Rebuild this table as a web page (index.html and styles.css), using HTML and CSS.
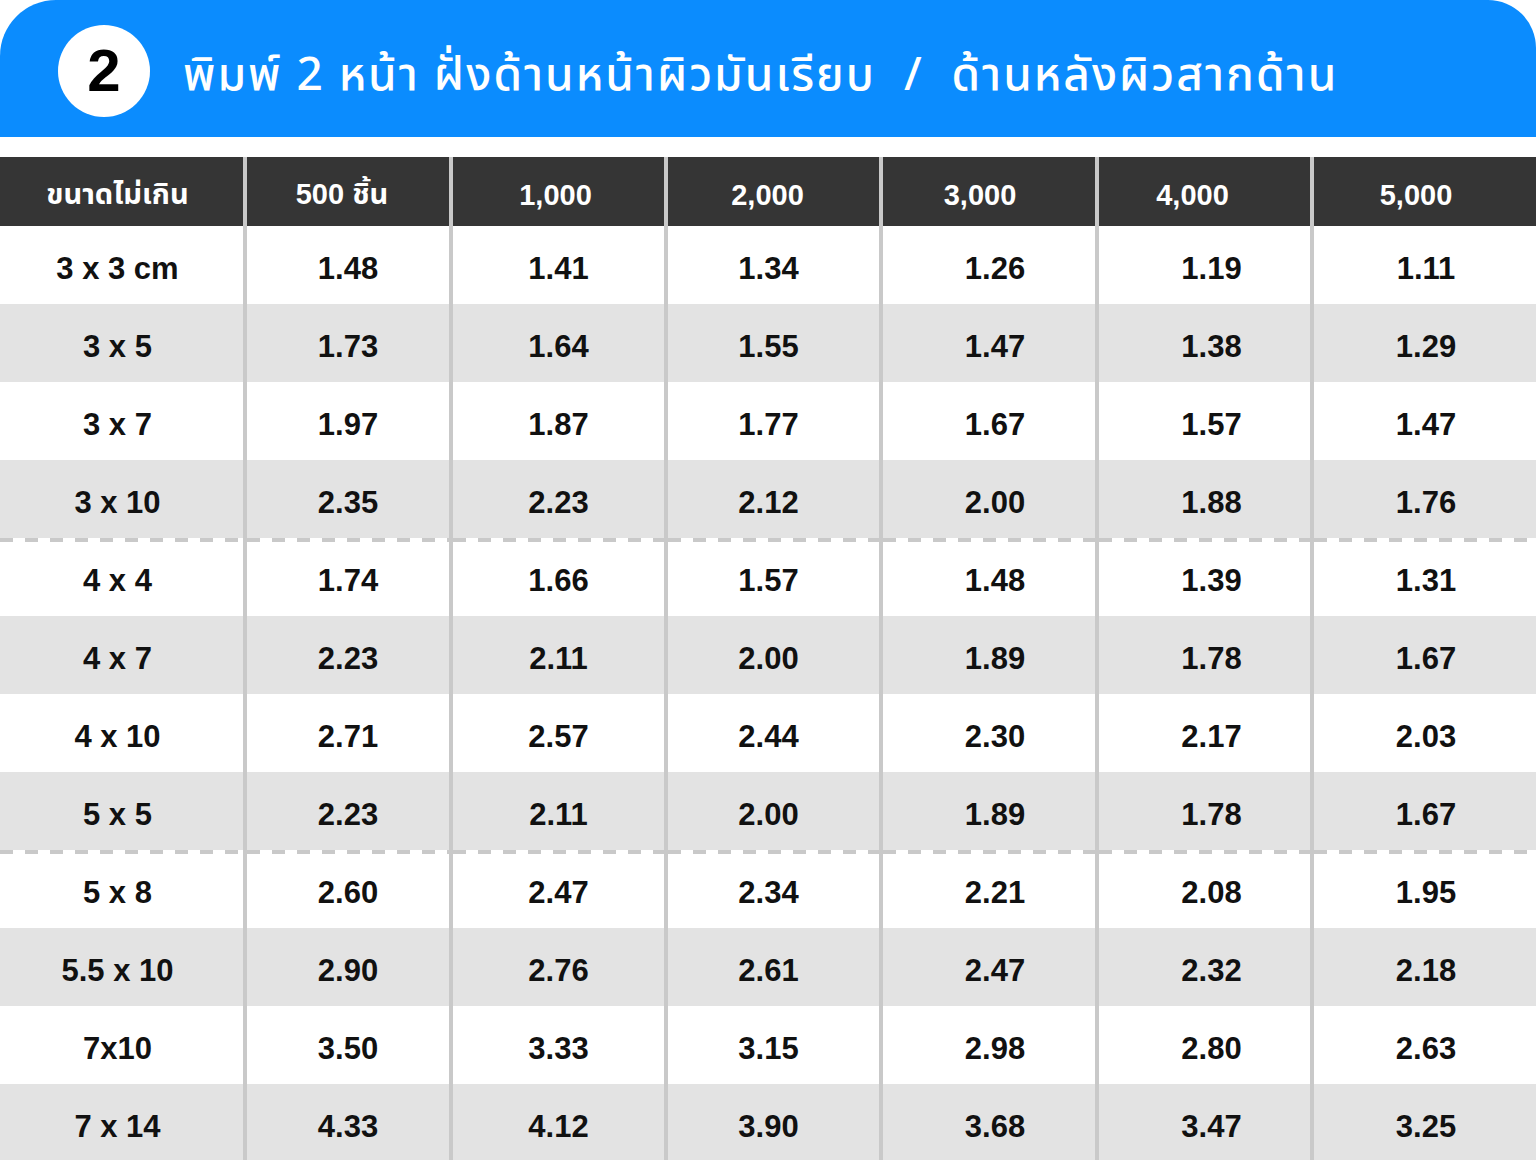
FILE: index.html
```html
<!DOCTYPE html>
<html lang="th">
<head>
<meta charset="utf-8">
<title>ราคา สติกเกอร์ พิมพ์ 2 หน้า</title>
<link rel="stylesheet" href="styles.css">
</head>
<body>
<div class="page">
  <header class="banner">
    <div class="badge">2</div>
    <h1 class="title">พิมพ์ 2 หน้า ฝั่งด้านหน้าผิวมันเรียบ &nbsp;/&nbsp; ด้านหลังผิวสากด้าน</h1>
  </header>

  <div class="table">
    <div class="cell head">ขนาดไม่เกิน</div>
    <div class="cell head">500 ชิ้น</div>
    <div class="cell head">1,000</div>
    <div class="cell head">2,000</div>
    <div class="cell head">3,000</div>
    <div class="cell head">4,000</div>
    <div class="cell head">5,000</div>

    <div class="cell">3 x 3 cm</div><div class="cell">1.48</div><div class="cell">1.41</div><div class="cell">1.34</div><div class="cell">1.26</div><div class="cell">1.19</div><div class="cell">1.11</div>

    <div class="cell alt">3 x 5</div><div class="cell alt">1.73</div><div class="cell alt">1.64</div><div class="cell alt">1.55</div><div class="cell alt">1.47</div><div class="cell alt">1.38</div><div class="cell alt">1.29</div>

    <div class="cell">3 x 7</div><div class="cell">1.97</div><div class="cell">1.87</div><div class="cell">1.77</div><div class="cell">1.67</div><div class="cell">1.57</div><div class="cell">1.47</div>

    <div class="cell alt">3 x 10</div><div class="cell alt">2.35</div><div class="cell alt">2.23</div><div class="cell alt">2.12</div><div class="cell alt">2.00</div><div class="cell alt">1.88</div><div class="cell alt">1.76</div>

    <div class="cell dash">4 x 4</div><div class="cell dash">1.74</div><div class="cell dash">1.66</div><div class="cell dash">1.57</div><div class="cell dash">1.48</div><div class="cell dash">1.39</div><div class="cell dash">1.31</div>

    <div class="cell alt">4 x 7</div><div class="cell alt">2.23</div><div class="cell alt">2.11</div><div class="cell alt">2.00</div><div class="cell alt">1.89</div><div class="cell alt">1.78</div><div class="cell alt">1.67</div>

    <div class="cell">4 x 10</div><div class="cell">2.71</div><div class="cell">2.57</div><div class="cell">2.44</div><div class="cell">2.30</div><div class="cell">2.17</div><div class="cell">2.03</div>

    <div class="cell alt">5 x 5</div><div class="cell alt">2.23</div><div class="cell alt">2.11</div><div class="cell alt">2.00</div><div class="cell alt">1.89</div><div class="cell alt">1.78</div><div class="cell alt">1.67</div>

    <div class="cell dash">5 x 8</div><div class="cell dash">2.60</div><div class="cell dash">2.47</div><div class="cell dash">2.34</div><div class="cell dash">2.21</div><div class="cell dash">2.08</div><div class="cell dash">1.95</div>

    <div class="cell alt">5.5 x 10</div><div class="cell alt">2.90</div><div class="cell alt">2.76</div><div class="cell alt">2.61</div><div class="cell alt">2.47</div><div class="cell alt">2.32</div><div class="cell alt">2.18</div>

    <div class="cell">7x10</div><div class="cell">3.50</div><div class="cell">3.33</div><div class="cell">3.15</div><div class="cell">2.98</div><div class="cell">2.80</div><div class="cell">2.63</div>

    <div class="cell alt">7 x 14</div><div class="cell alt">4.33</div><div class="cell alt">4.12</div><div class="cell alt">3.90</div><div class="cell alt">3.68</div><div class="cell alt">3.47</div><div class="cell alt">3.25</div>
  </div>
</div>
</body>
</html>
```

FILE: styles.css
```css
html, body {
  margin: 0;
  padding: 0;
  background: #ffffff;
}

body {
  width: 1536px;
  height: 1160px;
  overflow: hidden;
  font-family: "Liberation Sans", "Noto Sans Thai", "Noto Sans Thai UI", "Noto Sans", sans-serif;
}

.page {
  width: 1536px;
}

.banner {
  height: 137px;
  background: #0b8cfe;
  border-radius: 56px 48px 0 0;
  display: flex;
  align-items: center;
  padding-left: 58px;
  gap: 33px;
  box-sizing: border-box;
}

.badge {
  width: 92px;
  height: 92px;
  border-radius: 50%;
  background: #ffffff;
  color: #000000;
  display: flex;
  align-items: center;
  justify-content: center;
  font-size: 60px;
  font-weight: 700;
  line-height: 1;
  flex: none;
  margin-top: 4px;
}

.title {
  margin: 0;
  margin-top: 14px;
  color: #ffffff;
  font-family: "Noto Sans Thai", "Noto Sans Thai UI", "Liberation Sans", sans-serif;
  font-size: 46px;
  font-weight: 500;
  letter-spacing: 2px;
  white-space: nowrap;
  line-height: 1;
}

.table {
  margin-top: 20px;
  display: grid;
  grid-template-columns: 243px 202px 211px 211px 212px 211px 1fr;
  grid-template-rows: 69px repeat(12, 78px);
  column-gap: 4px;
  background: #c9c9c9;
}

.cell {
  background: #ffffff;
  color: #111111;
  display: flex;
  align-items: center;
  justify-content: center;
  font-size: 31px;
  font-weight: 700;
  padding-top: 7px;
  box-sizing: border-box;
}

.cell:nth-child(7n+1) { padding-right: 8px; }
.cell:nth-child(7n+4) { padding-right: 10px; }
.cell:nth-child(7n+5) { padding-left: 12px; }
.cell:nth-child(7n+6) { padding-left: 14px; }
.cell:nth-child(7n+7) { padding-left: 2px; }

.cell.alt {
  background: #e3e3e3;
}

.cell.dash {
  background-color: #ffffff;
  background-image: repeating-linear-gradient(to right, #c9c9c9 0 13px, transparent 13px 25px);
  background-size: 100% 4px;
  background-position: left top;
  background-repeat: no-repeat;
}

.cell.head {
  background: #353535;
  color: #ffffff;
  font-size: 29px;
  padding-top: 7px;
  padding-left: 0;
}

.cell.head:nth-child(1) { padding-right: 8px; }
.cell.head:nth-child(2) { padding-right: 12px; }
.cell.head:nth-child(3) { padding-right: 6px; }
.cell.head:nth-child(4) { padding-right: 12px; }
.cell.head:nth-child(5) { padding-right: 18px; }
.cell.head:nth-child(6) { padding-right: 24px; }
.cell.head:nth-child(7) { padding-right: 18px; }
```
